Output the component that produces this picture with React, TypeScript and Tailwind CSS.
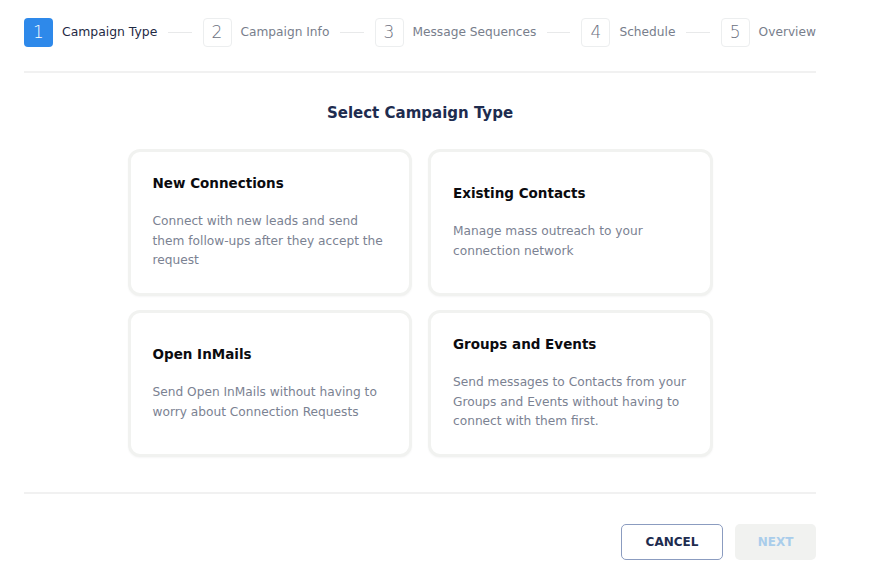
import React from "react";

const steps = ["Campaign Type", "Campaign Info", "Message Sequences", "Schedule", "Overview"];

const cards = [
  { title: "New Connections", desc: "Connect with new leads and send them follow-ups after they accept the request" },
  { title: "Existing Contacts", desc: "Manage mass outreach to your connection network" },
  { title: "Open InMails", desc: "Send Open InMails without having to worry about Connection Requests" },
  { title: "Groups and Events", desc: "Send messages to Contacts from your Groups and Events without having to connect with them first." },
];

export default function App() {
  return (
    <div className="min-h-[583px] w-[874px] bg-white" style={{ fontFamily: '"DejaVu Sans", "Noto Sans", sans-serif' }}>
      <div className="ml-[24px] w-[792px]">
        <div className="flex items-center pt-[18px]">
          {steps.map((s, i) => (
            <React.Fragment key={s}>
              <div className="flex items-center">
                <div
                  className={
                    i === 0
                      ? "flex h-[29px] w-[29px] items-center justify-center rounded-[4px] bg-[#2e89ea] text-[17px] font-light text-white"
                      : "flex h-[29px] w-[29px] items-center justify-center rounded-[4px] border border-[#eceeef] text-[17px] font-light text-[#6b7080]"
                  }
                >
                  {i + 1}
                </div>
                <span className={i === 0 ? "ml-[9px] text-[12.4px] text-[#1f2a44]" : "ml-[9px] text-[12.2px] text-[#787e8c]"}>{s}</span>
              </div>
              {i < steps.length - 1 && <div className="mx-[11px] h-[1px] flex-1 bg-[#e8e9ea]" />}
            </React.Fragment>
          ))}
        </div>
        <div className="mt-[24px] h-[2px] bg-[#f1f1f1]" />
        <h1 className="mt-[29px] text-center text-[15px] font-bold text-[#1e2c4f]">Select Campaign Type</h1>
        <div className="mx-auto mt-[24px] grid w-[585px] grid-cols-2 gap-x-[16px] gap-y-[14px]">
          {cards.map((c) => (
            <div
              key={c.title}
              className="flex h-[147px] flex-col justify-center rounded-[12px] border-[3px] border-[#f1f2f0] bg-white pl-[22px] pr-[16px] shadow-[0_1px_2px_rgba(0,0,0,0.04)]"
            >
              <div className="text-[13.5px] font-bold text-[#0b0b0f]">{c.title}</div>
              <div className="mt-[19px] text-[12.2px] leading-[19.5px] text-[#7b8292]">{c.desc}</div>
            </div>
          ))}
        </div>
        <div className="mt-[35px] h-[2px] bg-[#f1f1f1]" />
        <div className="mt-[30px] flex justify-end gap-[12px]">
          <button className="h-[36px] w-[102px] rounded-[5px] border border-[#8b9cc0] text-[12px] font-semibold text-[#1e2c4f]">CANCEL</button>
          <button className="h-[36px] w-[81px] rounded-[5px] bg-[#f1f2f0] text-[12px] font-semibold text-[#a9cdeb]">NEXT</button>
        </div>
      </div>
    </div>
  );
}
